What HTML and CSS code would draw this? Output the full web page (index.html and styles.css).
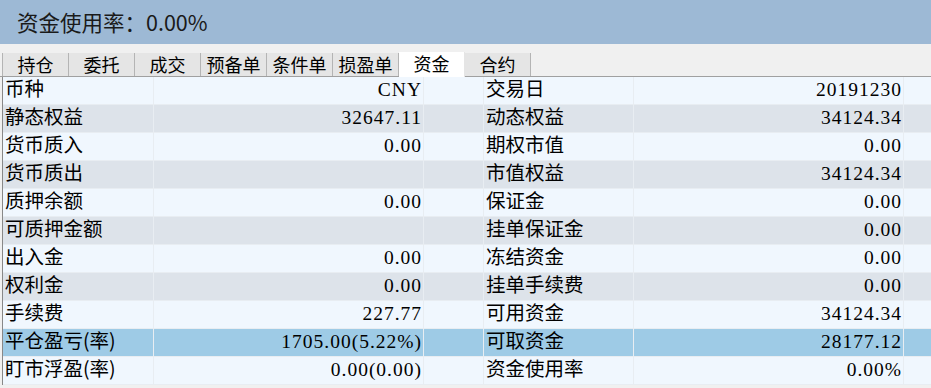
FILE: index.html
```html
<!DOCTYPE html>
<html lang="zh-CN">
<head>
    <meta charset="UTF-8">
    <title>资金</title>
    <link rel="stylesheet" href="styles.css">
</head>
<body>
    <div class="summary">资金使用率：0.00%</div>

    <div class="tabs">
        <div class="tab">持仓</div>
        <div class="tab">委托</div>
        <div class="tab">成交</div>
        <div class="tab">预备单</div>
        <div class="tab">条件单</div>
        <div class="tab">损盈单</div>
        <div class="tab active">资金</div>
        <div class="tab">合约</div>
    </div>

    <div class="grid">
        <div class="row">
            <div class="cell label">币种</div><div class="cell value">CNY</div><div class="cell"></div>
            <div class="cell label">交易日</div><div class="cell value">20191230</div><div class="cell last"></div>
        </div>
        <div class="row alt">
            <div class="cell label">静态权益</div><div class="cell value">32647.11</div><div class="cell"></div>
            <div class="cell label">动态权益</div><div class="cell value">34124.34</div><div class="cell last"></div>
        </div>
        <div class="row">
            <div class="cell label">货币质入</div><div class="cell value">0.00</div><div class="cell"></div>
            <div class="cell label">期权市值</div><div class="cell value">0.00</div><div class="cell last"></div>
        </div>
        <div class="row alt">
            <div class="cell label">货币质出</div><div class="cell value"></div><div class="cell"></div>
            <div class="cell label">市值权益</div><div class="cell value">34124.34</div><div class="cell last"></div>
        </div>
        <div class="row">
            <div class="cell label">质押余额</div><div class="cell value">0.00</div><div class="cell"></div>
            <div class="cell label">保证金</div><div class="cell value">0.00</div><div class="cell last"></div>
        </div>
        <div class="row alt">
            <div class="cell label">可质押金额</div><div class="cell value"></div><div class="cell"></div>
            <div class="cell label">挂单保证金</div><div class="cell value">0.00</div><div class="cell last"></div>
        </div>
        <div class="row">
            <div class="cell label">出入金</div><div class="cell value">0.00</div><div class="cell"></div>
            <div class="cell label">冻结资金</div><div class="cell value">0.00</div><div class="cell last"></div>
        </div>
        <div class="row alt">
            <div class="cell label">权利金</div><div class="cell value">0.00</div><div class="cell"></div>
            <div class="cell label">挂单手续费</div><div class="cell value">0.00</div><div class="cell last"></div>
        </div>
        <div class="row">
            <div class="cell label">手续费</div><div class="cell value">227.77</div><div class="cell"></div>
            <div class="cell label">可用资金</div><div class="cell value">34124.34</div><div class="cell last"></div>
        </div>
        <div class="row selected">
            <div class="cell label">平仓盈亏(率)</div><div class="cell value">1705.00(5.22%)</div><div class="cell"></div>
            <div class="cell label">可取资金</div><div class="cell value">28177.12</div><div class="cell last"></div>
        </div>
        <div class="row">
            <div class="cell label">盯市浮盈(率)</div><div class="cell value">0.00(0.00)</div><div class="cell"></div>
            <div class="cell label">资金使用率</div><div class="cell value">0.00%</div><div class="cell last"></div>
        </div>
    </div>
</body>
</html>
```

FILE: styles.css
```css
body {
    margin: 0;
    background-color: #f0f0f0;
    font-family: "Noto Sans CJK SC", sans-serif;
    color: #000;
    overflow: hidden;
}
.summary {
    height: 44px;
    line-height: 44px;
    padding-left: 17px;
    background-color: #9db9d5;
    font-size: 21.5px;
    color: #1a1a1a;
    box-sizing: border-box;
}
.tabs {
    display: flex;
    height: 33px;
    padding: 9px 0 0 3px;
    box-sizing: border-box;
    border-bottom: 1px solid #a0a0a0;
}
.tab {
    width: 65px;
    height: 23px;
    line-height: 23px;
    text-align: center;
    font-size: 18px;
    background-color: #e5e5e5;
    border-right: 1px solid #b4b4b4;
}
.tab:first-child {
    border-left: 1px solid #b4b4b4;
    margin-left: -1px;
}
.tab.active {
    background-color: #fff;
    height: 25px;
    margin-top: -1px;
    border-right-color: #e5e5e5;
}
.grid {
    margin-left: 2px;
    border-left: 1px solid #888;
}
.row {
    display: grid;
    grid-template-columns: 151px 270px 60px 150px 270px 1fr;
    height: 28px;
    background-color: #f0f7fe;
}
.row.alt {
    background-color: #dde3ea;
}
.row.selected {
    background-color: #9ecbe6;
}
.cell {
    height: 27px;
    border-right: 1px solid #e8edf2;
    border-bottom: 1px solid #e8edf2;
    font-size: 19.5px;
    line-height: 22px;
    white-space: nowrap;
}
.cell.last {
    border-right: 0;
}
.label {
    padding-left: 2px;
}
.value {
    text-align: right;
    padding-right: 1px;
    font-family: "Liberation Serif", serif;
    letter-spacing: 1px;
    line-height: 25px;
}
```
